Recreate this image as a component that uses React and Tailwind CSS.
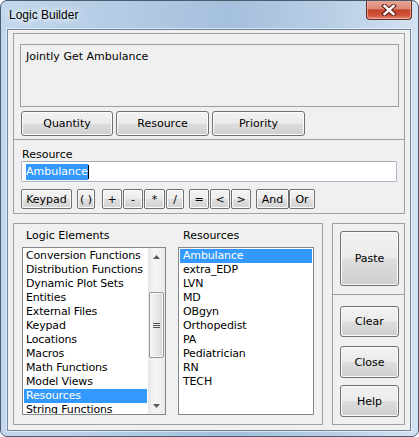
import React from "react";

function Btn({ className = "", children }) {
  return (
    <div
      className={`flex items-center justify-center rounded-[3px] border border-[#707070] bg-[linear-gradient(#f2f2f2_0%,#ebebeb_48%,#dddddd_52%,#cfcfcf_100%)] shadow-[inset_0_0_0_1px_#fbfbfb] text-[11px] leading-[13px] text-black whitespace-nowrap ${className}`}
    >
      {children}
    </div>
  );
}

function KBtn({ className = "", children }) {
  return (
    <div
      className={`flex items-center justify-center rounded-[2px] border border-[#707070] bg-[linear-gradient(#f4f4f4_0%,#ececec_48%,#dedede_52%,#d2d2d2_100%)] shadow-[inset_0_0_0_1px_#fcfcfc] text-[11px] leading-[13px] text-black whitespace-nowrap ${className}`}
    >
      {children}
    </div>
  );
}

function Arrow({ up }) {
  return (
    <div className="h-[17px] flex items-center justify-center">
      <svg width="7" height="4" viewBox="0 0 7 4">
        {up ? (
          <path d="M0 4 L3.5 0 L7 4 Z" fill="#5a5a5a" />
        ) : (
          <path d="M0 0 L3.5 4 L7 0 Z" fill="#5a5a5a" />
        )}
      </svg>
    </div>
  );
}

const logicItems = [
  "Conversion Functions",
  "Distribution Functions",
  "Dynamic Plot Sets",
  "Entities",
  "External Files",
  "Keypad",
  "Locations",
  "Macros",
  "Math Functions",
  "Model Views",
  "Resources",
  "String Functions",
];

const resourceItems = [
  "Ambulance",
  "extra_EDP",
  "LVN",
  "MD",
  "OBgyn",
  "Orthopedist",
  "PA",
  "Pediatrician",
  "RN",
  "TECH",
];

export default function App() {
  return (
    <div className="w-[419px] h-[437px] flex flex-col rounded-[7px] border border-[#4b5b6c] bg-[linear-gradient(90deg,#c2d7ed_0%,#b3cbe4_30%,#a5c0dc_55%,#b9cfe6_80%,#d4e3f3_100%)] pl-[6px] pr-[7px] pb-[5px] overflow-hidden font-['DejaVu_Sans',sans-serif] text-[11px] leading-[13px] text-black">
      {/* Title bar */}
      <div className="h-[28px] flex justify-between items-start">
        <div className="self-center pl-[2px] font-['Liberation_Sans',Arial,sans-serif] text-[12px] leading-[14px] text-black [text-shadow:0_0_6px_#ffffff,0_0_10px_#ffffff]">
          Logic Builder
        </div>
        <div className="-mt-[1px] -mr-[1px] w-[46px] h-[20px] rounded-b-[4px] border border-t-0 border-[#6b2b22] bg-[linear-gradient(#e9a99a_0%,#dc8a77_45%,#c6452d_52%,#cf5238_80%,#e08f78_100%)] shadow-[inset_0_0_0_1px_rgba(255,220,210,0.45)] flex items-center justify-center">
          <svg width="16" height="12" viewBox="0 0 16 12">
            <path d="M3.5 2 L12.5 10 M12.5 2 L3.5 10" stroke="#5e2219" strokeWidth="4.6" strokeLinecap="square" />
            <path d="M3.5 2 L12.5 10 M12.5 2 L3.5 10" stroke="#ffffff" strokeWidth="2.4" strokeLinecap="square" />
          </svg>
        </div>
      </div>

      {/* Client area */}
      <div className="w-[404px] h-[402px] border border-[#71849a] bg-[#f0f0f0] pl-[5px] pt-[3px] shadow-[0_0_0_1px_rgba(255,255,255,0.5)]">
        {/* Top group */}
        <div className="w-[392px] h-[181px] border border-[#a0a0a0] flex flex-col">
          <div className="ml-[6px] mt-[10px] w-[379px] h-[63px] border border-[#a0a0a0] pl-[5px] pt-[5px]">
            Jointly Get Ambulance
          </div>
          <div className="ml-[7px] mt-[4px] flex gap-[3px]">
            <Btn className="w-[92px] h-[25px]">Quantity</Btn>
            <Btn className="w-[93px] h-[25px]">Resource</Btn>
            <Btn className="w-[93px] h-[25px]">Priority</Btn>
          </div>
          <div className="mt-[3px] h-px bg-[#a0a0a0]" />
          <div className="pl-[8px] pt-[8px] flex flex-col">
            <div className="h-[13px]">Resource</div>
            <div className="-ml-[1px] w-[376px] h-[21px] rounded-[2px] border border-[#abb8c8] border-t-[#a3adba] bg-white flex items-center pl-[4px]">
              <span className="h-[16px] leading-[16px] bg-[#3399ff] text-white">Ambulance</span>
              <span className="w-px h-[14px] bg-black" />
            </div>
            <div className="-ml-[1px] mt-[7px] flex h-[20px]">
              <KBtn className="w-[51px]">Keypad</KBtn>
              <KBtn className="ml-[5px] w-[18px]">( )</KBtn>
              <KBtn className="ml-[7px] w-[20px]">+</KBtn>
              <KBtn className="ml-[1px] w-[20px]">-</KBtn>
              <KBtn className="ml-[1px] w-[21px]">*</KBtn>
              <KBtn className="ml-[1px] w-[18px]">/</KBtn>
              <KBtn className="ml-[5px] w-[20px]">=</KBtn>
              <KBtn className="ml-[1px] w-[20px]">&lt;</KBtn>
              <KBtn className="ml-[1px] w-[20px]">&gt;</KBtn>
              <KBtn className="ml-[5px] w-[33px]">And</KBtn>
              <KBtn className="w-[26px]">Or</KBtn>
            </div>
          </div>
        </div>

        {/* Bottom area */}
        <div className="mt-[9px] flex gap-[9px]">
          <div className="w-[310px] h-[202px] border border-[#a0a0a0] pl-[8px] pt-[5px] flex gap-[12px]">
            {/* Logic Elements */}
            <div className="w-[144px] flex flex-col">
              <div className="h-[13px] pl-[4px]">Logic Elements</div>
              <div className="mt-[5px] h-[168px] w-[144px] border border-[#828790] bg-white flex overflow-hidden">
                <div className="flex-1 p-[1px] overflow-hidden tracking-[-0.15px]">
                  {logicItems.map((it) => (
                    <div
                      key={it}
                      className={`h-[14px] leading-[14px] pl-[2px] whitespace-nowrap ${it === "Resources" ? "bg-[#3399ff] text-white" : ""}`}
                    >
                      {it}
                    </div>
                  ))}
                </div>
                <div className="w-[17px] h-full flex flex-col bg-[linear-gradient(90deg,#e6e6e6_0%,#f4f4f4_35%,#f1f1f1_70%,#e9e9e9_100%)]">
                  <Arrow up />
                  <div className="flex-1 flex flex-col">
                    <div className="mt-[27px] mx-auto w-[15px] h-[66px] rounded-[2px] border border-[#959595] bg-[linear-gradient(90deg,#f5f5f5_0%,#e9e9e9_50%,#d7d7d7_100%)] shadow-[inset_0_0_0_1px_#fafafa] flex flex-col items-center justify-center gap-[1px]">
                      <div className="w-[7px] h-px bg-[#555]" />
                      <div className="w-[7px] h-px bg-[#555]" />
                      <div className="w-[7px] h-px bg-[#555]" />
                    </div>
                  </div>
                  <Arrow />
                </div>
              </div>
            </div>
            {/* Resources */}
            <div className="w-[136px] flex flex-col">
              <div className="h-[13px] pl-[5px]">Resources</div>
              <div className="mt-[5px] h-[168px] w-[136px] border border-[#828790] bg-white p-[1px] overflow-hidden tracking-[-0.15px]">
                {resourceItems.map((it) => (
                  <div
                    key={it}
                    className={`h-[14px] leading-[14px] pl-[3px] whitespace-nowrap ${it === "Ambulance" ? "bg-[#3399ff] text-white" : ""}`}
                  >
                    {it}
                  </div>
                ))}
              </div>
            </div>
          </div>

          {/* Right column */}
          <div className="w-[73px] h-[202px] border border-[#a0a0a0] flex flex-col">
            <div className="pl-[7px] pt-[7px] pb-[8px]">
              <Btn className="w-[59px] h-[55px]">Paste</Btn>
            </div>
            <div className="h-px bg-[#a0a0a0]" />
            <div className="pl-[7px] pt-[11px] flex flex-col">
              <Btn className="w-[59px] h-[31px]">Clear</Btn>
              <Btn className="mt-[9px] w-[59px] h-[32px]">Close</Btn>
              <Btn className="mt-[7px] w-[59px] h-[32px]">Help</Btn>
            </div>
          </div>
        </div>
      </div>
    </div>
  );
}
